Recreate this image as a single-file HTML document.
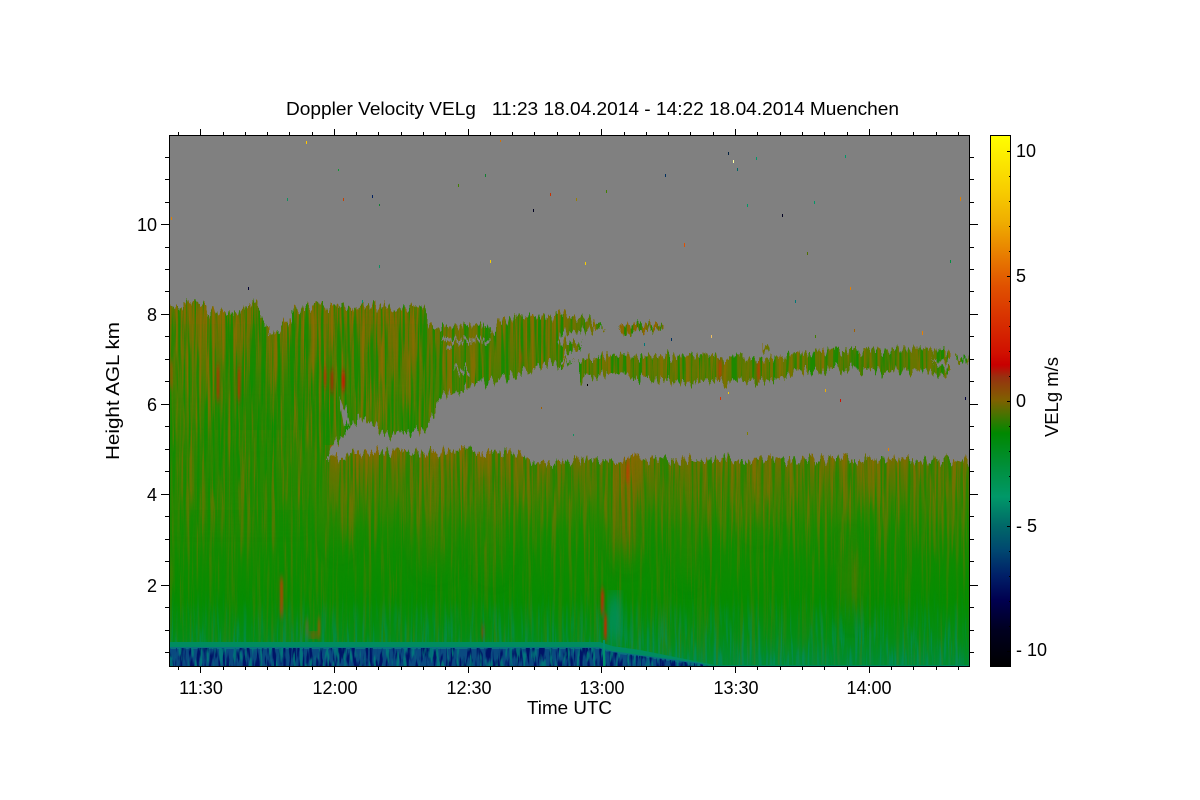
<!DOCTYPE html>
<html>
<head>
<meta charset="utf-8">
<title>Doppler Velocity VELg</title>
<style>
html,body{margin:0;padding:0;background:#fff}
svg{display:block}
text{font-family:"Liberation Sans",sans-serif;fill:#000}
</style>
</head>
<body>
<svg width="1200" height="800" viewBox="0 0 1200 800" xmlns="http://www.w3.org/2000/svg">
<defs>
<clipPath id="plot"><rect x="170" y="136" width="800" height="530"/></clipPath>
<filter id="jag" filterUnits="userSpaceOnUse" x="140" y="280" width="860" height="420" color-interpolation-filters="sRGB">
<feTurbulence type="fractalNoise" baseFrequency="0.33 0.012" numOctaves="3" seed="5" result="n"/>
<feColorMatrix in="n" type="matrix" values=".35 0 0 0 .325  0 1.6 0 0 -.3  0 0 1 0 0  0 0 0 0 1" result="m"/>
<feDisplacementMap in="SourceGraphic" in2="m" scale="14" xChannelSelector="R" yChannelSelector="G"/>
<feComponentTransfer><feFuncA type="discrete" tableValues="0 1"/></feComponentTransfer>
</filter>
<mask id="cloudM" maskUnits="userSpaceOnUse" x="140" y="280" width="860" height="420">
<g filter="url(#jag)">
<g fill="#fff">
<polygon points="150,700 150,308 170,307 205,303 208,313 240,312 244,304 258,304 262,318 270,328 268,335 275,335 285,322 292,322 291,310 320,306 425,308 428,322 437,328 455,325 480,325 492,327 491,334 495,333 497,322 525,316 570,316 590,320 606,328 575,332 560,333 558,340 582,344 578,350 566,352 560,358 575,362 540,366 520,372 505,378 490,382 470,385 460,392 445,395 437,403 432,418 425,430 405,433 385,435 375,425 360,418 345,432 325,456 340,458 360,452 400,452 450,452 500,452 520,455 540,466 555,463 580,459 700,459 800,460 880,460 1000,461 1000,700"/>
<polygon points="578,360 600,357 640,356 700,356 725,358 745,358 765,358 785,355 800,353 830,350 870,350 900,350 945,349 951,353 950,360 930,358 950,368 951,373 900,372 870,371 850,368 825,370 800,371 780,377 755,381 740,383 720,382 690,384 670,381 640,378 610,376 585,376 580,382"/>
<polygon points="618,324 640,324 664,325 663,330 635,331 630,335 622,335"/>
<polygon points="762,345 770,346 769,350 762,349"/>
<polygon points="955,354 970,354 970,358 956,358"/>
</g>
<g fill="#000">
<polygon points="440,339 490,339 490,342 445,343"/>
<polygon points="454,368 470,368 470,372 456,372"/>
<polygon points="340,398 345,408 350,425 344,425 341,410"/>
<polygon points="446,348 452,348 452,352 446,352"/>
<polygon points="575,336 590,336 590,339 575,339"/>
</g>
</g>
</mask>
<linearGradient id="base" gradientUnits="userSpaceOnUse" x1="0" y1="300" x2="0" y2="667">
<stop offset="0" stop-color="#7c6c00"/>
<stop offset=".1" stop-color="#6c7200"/>
<stop offset=".22" stop-color="#4c7e00"/>
<stop offset=".33" stop-color="#3a8300"/>
<stop offset=".44" stop-color="#3c8200"/>
<stop offset=".55" stop-color="#2c8600"/>
<stop offset=".68" stop-color="#128a00"/>
<stop offset=".82" stop-color="#068c00"/>
<stop offset=".92" stop-color="#048c18"/>
<stop offset="1" stop-color="#008c40"/>
</linearGradient>
<linearGradient id="topR" gradientUnits="userSpaceOnUse" x1="0" y1="450" x2="0" y2="530">
<stop offset="0" stop-color="#866800" stop-opacity="1"/>
<stop offset=".25" stop-color="#6c7000" stop-opacity=".8"/>
<stop offset="1" stop-color="#4a7c00" stop-opacity="0"/>
</linearGradient>
<linearGradient id="cb" gradientUnits="userSpaceOnUse" x1="0" y1="135" x2="0" y2="667">
<stop offset="0" stop-color="#ffff00"/>
<stop offset=".098" stop-color="#f8d000"/>
<stop offset=".16" stop-color="#f0b000"/>
<stop offset=".222" stop-color="#e88000"/>
<stop offset=".286" stop-color="#e05000"/>
<stop offset=".348" stop-color="#d83000"/>
<stop offset=".41" stop-color="#d01000"/>
<stop offset=".432" stop-color="#c80000"/>
<stop offset=".455" stop-color="#983010"/>
<stop offset=".498" stop-color="#806000"/>
<stop offset=".522" stop-color="#507000"/>
<stop offset=".56" stop-color="#008800"/>
<stop offset=".63" stop-color="#009040"/>
<stop offset=".68" stop-color="#009868"/>
<stop offset=".735" stop-color="#006868"/>
<stop offset=".78" stop-color="#004870"/>
<stop offset=".827" stop-color="#002068"/>
<stop offset=".874" stop-color="#000050"/>
<stop offset=".93" stop-color="#000020"/>
<stop offset="1" stop-color="#000000"/>
</linearGradient>
<linearGradient id="fadeM" gradientUnits="userSpaceOnUse" x1="0" y1="300" x2="0" y2="667">
<stop offset="0" stop-color="#ccc"/>
<stop offset=".3" stop-color="#bbb"/>
<stop offset=".55" stop-color="#888"/>
<stop offset=".8" stop-color="#3c3c3c"/>
<stop offset="1" stop-color="#333"/>
</linearGradient>
<mask id="fade" maskUnits="userSpaceOnUse" x="150" y="290" width="840" height="390"><rect x="150" y="290" width="840" height="390" fill="url(#fadeM)"/></mask>
<linearGradient id="fadeT" gradientUnits="userSpaceOnUse" x1="0" y1="590" x2="0" y2="645">
<stop offset="0" stop-color="#000"/>
<stop offset="1" stop-color="#999"/>
</linearGradient>
<mask id="fadeTeal" maskUnits="userSpaceOnUse" x="150" y="580" width="840" height="90"><rect x="150" y="580" width="840" height="90" fill="url(#fadeT)"/></mask>
<filter id="sBrown" filterUnits="userSpaceOnUse" x="160" y="290" width="820" height="390" color-interpolation-filters="sRGB">
<feTurbulence type="fractalNoise" baseFrequency="0.32 0.009" numOctaves="3" seed="4"/>
<feColorMatrix type="matrix" values="0 0 0 0 .56  0 0 0 0 .42  0 0 0 0 0  5 0 0 0 -2.3"/>
</filter>
<filter id="sGreen" filterUnits="userSpaceOnUse" x="160" y="290" width="820" height="390" color-interpolation-filters="sRGB">
<feTurbulence type="fractalNoise" baseFrequency="0.36 0.01" numOctaves="3" seed="11"/>
<feColorMatrix type="matrix" values="0 0 0 0 .02  0 0 0 0 .56  0 0 0 0 0  5 0 0 0 -2.3"/>
</filter>
<filter id="sTeal" filterUnits="userSpaceOnUse" x="160" y="580" width="820" height="90" color-interpolation-filters="sRGB">
<feTurbulence type="fractalNoise" baseFrequency="0.36 0.02" numOctaves="2" seed="7"/>
<feColorMatrix type="matrix" values="0 0 0 0 0  0 0 0 0 .55  0 0 0 0 .4  6 0 0 0 -3"/>
</filter>
<filter id="sBlue" filterUnits="userSpaceOnUse" x="160" y="640" width="820" height="30" color-interpolation-filters="sRGB">
<feTurbulence type="fractalNoise" baseFrequency="0.3 0.05" numOctaves="2" seed="9"/>
<feColorMatrix type="matrix" values="0 0 0 0 0  0 0 0 0 .08  0 0 0 0 .4  7 0 0 0 -3.3"/>
</filter>
<filter id="sBlueT" filterUnits="userSpaceOnUse" x="160" y="640" width="820" height="30" color-interpolation-filters="sRGB">
<feTurbulence type="fractalNoise" baseFrequency="0.3 0.05" numOctaves="2" seed="21"/>
<feColorMatrix type="matrix" values="0 0 0 0 0  0 0 0 0 .5  0 0 0 0 .48  7 0 0 0 -3.7"/>
</filter>
<clipPath id="blue"><polygon points="160,648 598,648 612,652 640,656 670,660 700,664 712,667 160,670"/></clipPath>
<filter id="b3"><feGaussianBlur stdDeviation="3 10"/></filter>
<filter id="b1"><feGaussianBlur stdDeviation="1 4"/></filter>
<filter id="b8"><feGaussianBlur stdDeviation="8 14"/></filter>
</defs>

<rect width="1200" height="800" fill="#fff"/>
<rect x="169" y="135" width="801" height="532" fill="#808080"/>

<g clip-path="url(#plot)">
<g mask="url(#cloudM)">
<rect x="150" y="290" width="840" height="390" fill="url(#base)"/>
<rect x="325" y="445" width="660" height="90" fill="url(#topR)"/>
<rect x="578" y="345" width="400" height="45" fill="#6f7400" opacity=".65"/>
<rect x="150" y="300" width="290" height="24" fill="#866a00" opacity=".4"/>
<rect x="612" y="320" width="56" height="18" fill="#966000" opacity=".8"/>
<g filter="url(#b8)">
<rect x="618" y="460" width="18" height="90" fill="#a85a00" opacity=".8"/>
<rect x="845" y="550" width="14" height="60" fill="#7c6c00" opacity=".45"/>
<rect x="680" y="470" width="16" height="100" fill="#7c6c00" opacity=".3"/>
<rect x="420" y="490" width="30" height="70" fill="#7c6c00" opacity=".35"/>
<rect x="330" y="460" width="20" height="80" fill="#7c6c00" opacity=".35"/>
<rect x="480" y="505" width="24" height="60" fill="#7c6c00" opacity=".25"/>
<rect x="745" y="462" width="26" height="60" fill="#7c6c00" opacity=".35"/>
<rect x="845" y="352" width="45" height="18" fill="#008c00" opacity=".8"/>
<rect x="220" y="370" width="120" height="60" fill="#008c00" opacity=".4"/>
<rect x="170" y="430" width="140" height="80" fill="#1a8900" opacity=".5"/>
<rect x="345" y="330" width="80" height="40" fill="#846a00" opacity=".4"/>
</g>
<g mask="url(#fade)">
<rect x="150" y="290" width="840" height="390" filter="url(#sBrown)"/>
<rect x="150" y="290" width="840" height="390" filter="url(#sGreen)"/>
</g>
<g filter="url(#b1)">
<rect x="217" y="366" width="2" height="34" fill="#c02800"/>
<rect x="238" y="368" width="2" height="32" fill="#c02800"/>
<rect x="324" y="368" width="2" height="18" fill="#c02800"/>
<rect x="331" y="370" width="2" height="22" fill="#c81800"/>
<rect x="342" y="372" width="3" height="18" fill="#d01000"/>
<rect x="170" y="362" width="2" height="26" fill="#a85000"/>
<rect x="520" y="352" width="2" height="12" fill="#a85000"/>
<rect x="718" y="358" width="4" height="22" fill="#a05000"/>
<rect x="757" y="360" width="3" height="20" fill="#b04000"/>
<rect x="719" y="362" width="2" height="18" fill="#b84000"/>
<rect x="626" y="462" width="3" height="20" fill="#b84000"/>
<rect x="280" y="578" width="3" height="38" fill="#b04400"/>
<rect x="601" y="590" width="3" height="24" fill="#c82800"/>
<rect x="604" y="615" width="3" height="24" fill="#c82800"/>
<rect x="482" y="626" width="2" height="12" fill="#c82000"/>
<rect x="306" y="620" width="2" height="18" fill="#b05000"/>
<rect x="318" y="618" width="2" height="20" fill="#b05000"/>
</g>
<rect x="309" y="632" width="9" height="6" fill="#a05000" filter="url(#b1)" opacity=".7"/>
<rect x="608" y="595" width="14" height="46" fill="#009070" filter="url(#b3)" opacity=".7"/>
<g mask="url(#fadeTeal)"><rect x="160" y="580" width="820" height="90" filter="url(#sTeal)"/></g>
</g>

<polygon points="160,642 600,642 612,646 640,650 660,654 690,660 715,665 975,665 975,670 160,670" fill="#008c60"/>
<polygon points="160,647 598,647 612,651 640,655 670,659 700,663 712,667 160,670" fill="#0a7080"/>
<polygon points="160,649 598,649 612,653 640,657 670,661 695,666 160,668" fill="#0a4a80"/>
<g clip-path="url(#blue)">
<rect x="160" y="640" width="820" height="30" filter="url(#sBlue)"/>
<rect x="160" y="640" width="820" height="30" filter="url(#sBlueT)" opacity=".8"/>
</g>
<rect x="603" y="640" width="2" height="27" fill="#00906a"/>

<!-- specks -->
<g shape-rendering="crispEdges">
<rect x="306" y="141" width="1" height="3" fill="#ffc800"/>
<rect x="338" y="169" width="1" height="2" fill="#0a9a30"/>
<rect x="287" y="198" width="1" height="3" fill="#109060"/>
<rect x="343" y="198" width="1" height="3" fill="#c84000"/>
<rect x="372" y="195" width="1" height="3" fill="#002060"/>
<rect x="379" y="204" width="1" height="2" fill="#108030"/>
<rect x="171" y="217" width="1" height="3" fill="#e08000"/>
<rect x="379" y="265" width="1" height="3" fill="#109060"/>
<rect x="248" y="287" width="1" height="3" fill="#000030"/>
<rect x="500" y="140" width="1" height="2" fill="#d87000"/>
<rect x="458" y="184" width="1" height="3" fill="#408000"/>
<rect x="485" y="174" width="1" height="3" fill="#108030"/>
<rect x="550" y="193" width="1" height="3" fill="#c83000"/>
<rect x="576" y="198" width="1" height="3" fill="#988000"/>
<rect x="606" y="190" width="1" height="3" fill="#408000"/>
<rect x="533" y="209" width="1" height="3" fill="#000020"/>
<rect x="665" y="174" width="1" height="3" fill="#003060"/>
<rect x="728" y="152" width="1" height="3" fill="#002040"/>
<rect x="733" y="160" width="1" height="3" fill="#ffffa0"/>
<rect x="737" y="168" width="1" height="3" fill="#006868"/>
<rect x="756" y="157" width="1" height="3" fill="#009868"/>
<rect x="845" y="155" width="1" height="3" fill="#009868"/>
<rect x="782" y="214" width="1" height="3" fill="#000020"/>
<rect x="747" y="204" width="1" height="3" fill="#009868"/>
<rect x="814" y="201" width="1" height="3" fill="#009868"/>
<rect x="960" y="197" width="1" height="4" fill="#e08000"/>
<rect x="684" y="243" width="1" height="4" fill="#e05000"/>
<rect x="490" y="260" width="1" height="3" fill="#f8d000"/>
<rect x="585" y="262" width="1" height="3" fill="#f8d000"/>
<rect x="807" y="252" width="1" height="3" fill="#507000"/>
<rect x="850" y="287" width="1" height="3" fill="#e88000"/>
<rect x="950" y="260" width="1" height="3" fill="#009040"/>
<rect x="795" y="300" width="1" height="3" fill="#007878"/>
<rect x="362" y="300" width="1" height="3" fill="#009868"/>
<rect x="711" y="335" width="1" height="3" fill="#f0c060"/>
<rect x="922" y="331" width="1" height="4" fill="#e88000"/>
<rect x="854" y="329" width="1" height="3" fill="#a06000"/>
<rect x="815" y="335" width="1" height="3" fill="#408000"/>
<rect x="644" y="343" width="1" height="3" fill="#007878"/>
<rect x="671" y="338" width="1" height="3" fill="#003060"/>
<rect x="587" y="384" width="1" height="2" fill="#000"/>
<rect x="720" y="397" width="1" height="3" fill="#d83000"/>
<rect x="728" y="392" width="1" height="2" fill="#f8d000"/>
<rect x="825" y="389" width="1" height="3" fill="#f0b000"/>
<rect x="840" y="399" width="1" height="3" fill="#d01000"/>
<rect x="965" y="397" width="1" height="3" fill="#000040"/>
<rect x="541" y="407" width="1" height="2" fill="#a06000"/>
<rect x="573" y="434" width="1" height="2" fill="#109060"/>
<rect x="747" y="432" width="1" height="3" fill="#808000"/>
<rect x="888" y="448" width="1" height="3" fill="#e88000"/>
</g>
</g>

<!-- plot frame + ticks -->
<g fill="none" stroke="#000" stroke-width="1" shape-rendering="crispEdges">
<rect x="169.5" y="135.5" width="800" height="531"/>
<path d="M178.5 135v-3M223.5 135v-3M245.5 135v-3M267.5 135v-3M289.5 135v-3M312.5 135v-3M356.5 135v-3M378.5 135v-3M401.5 135v-3M423.5 135v-3M445.5 135v-3M490.5 135v-3M512.5 135v-3M534.5 135v-3M557.5 135v-3M579.5 135v-3M624.5 135v-3M646.5 135v-3M668.5 135v-3M690.5 135v-3M713.5 135v-3M757.5 135v-3M780.5 135v-3M802.5 135v-3M824.5 135v-3M847.5 135v-3M891.5 135v-3M913.5 135v-3M936.5 135v-3M958.5 135v-3"/>
<path d="M200.5 135v-6M334.5 135v-6M468.5 135v-6M601.5 135v-6M735.5 135v-6M869.5 135v-6"/>
<path d="M178.5 667v3M223.5 667v3M245.5 667v3M267.5 667v3M289.5 667v3M312.5 667v3M356.5 667v3M378.5 667v3M401.5 667v3M423.5 667v3M445.5 667v3M490.5 667v3M512.5 667v3M534.5 667v3M557.5 667v3M579.5 667v3M624.5 667v3M646.5 667v3M668.5 667v3M690.5 667v3M713.5 667v3M757.5 667v3M780.5 667v3M802.5 667v3M824.5 667v3M847.5 667v3M891.5 667v3M913.5 667v3M936.5 667v3M958.5 667v3"/>
<path d="M200.5 667v6M334.5 667v6M468.5 667v6M601.5 667v6M735.5 667v6M869.5 667v6"/>
<path d="M169 157.5h-4M169 179.5h-4M169 202.5h-4M169 247.5h-4M169 269.5h-4M169 291.5h-4M169 336.5h-4M169 359.5h-4M169 381.5h-4M169 426.5h-4M169 449.5h-4M169 471.5h-4M169 516.5h-4M169 539.5h-4M169 561.5h-4M169 607.5h-4M169 630.5h-4M169 652.5h-4"/>
<path d="M169 224.5h-8M169 314.5h-8M169 404.5h-8M169 494.5h-8M169 585.5h-8"/>
<path d="M970 157.5h4M970 179.5h4M970 202.5h4M970 247.5h4M970 269.5h4M970 291.5h4M970 336.5h4M970 359.5h4M970 381.5h4M970 426.5h4M970 449.5h4M970 471.5h4M970 516.5h4M970 539.5h4M970 561.5h4M970 607.5h4M970 630.5h4M970 652.5h4"/>
<path d="M970 224.5h8M970 314.5h8M970 404.5h8M970 494.5h8M970 585.5h8"/>
</g>

<!-- colorbar -->
<rect x="990" y="135" width="20" height="532" fill="url(#cb)"/>
<g fill="none" stroke="#000" stroke-width="1" shape-rendering="crispEdges">
<rect x="990.5" y="135.5" width="20" height="531"/>
<path d="M1011 151.5h-4M1011 276.5h-4M1011 401.5h-4M1011 526.5h-4M1011 651.5h-4"/>
<path d="M1011 176.5h-2M1011 201.5h-2M1011 226.5h-2M1011 251.5h-2M1011 301.5h-2M1011 326.5h-2M1011 351.5h-2M1011 376.5h-2M1011 426.5h-2M1011 451.5h-2M1011 476.5h-2M1011 501.5h-2M1011 551.5h-2M1011 576.5h-2M1011 601.5h-2M1011 626.5h-2"/>
</g>

<!-- text -->
<text x="286" y="115" font-size="18" textLength="613" lengthAdjust="spacingAndGlyphs" xml:space="preserve">Doppler Velocity VELg   11:23 18.04.2014 - 14:22 18.04.2014 Muenchen</text>
<g font-size="18" text-anchor="end">
<text x="157" y="231">10</text>
<text x="157" y="321">8</text>
<text x="157" y="411">6</text>
<text x="157" y="501">4</text>
<text x="157" y="592">2</text>
</g>
<g font-size="18" text-anchor="middle">
<text x="201" y="694">11:30</text>
<text x="335" y="694">12:00</text>
<text x="469" y="694">12:30</text>
<text x="602" y="694">13:00</text>
<text x="736" y="694">13:30</text>
<text x="869" y="694">14:00</text>
</g>
<text x="527" y="714" font-size="18" textLength="85" lengthAdjust="spacingAndGlyphs">Time UTC</text>
<text transform="translate(119 460) rotate(-90)" font-size="18" textLength="138" lengthAdjust="spacingAndGlyphs">Height AGL km</text>
<text transform="translate(1058 437) rotate(-90)" font-size="18" textLength="80" lengthAdjust="spacingAndGlyphs">VELg m/s</text>
<g font-size="18">
<text x="1016" y="157">10</text>
<text x="1016" y="282">5</text>
<text x="1016" y="407">0</text>
<text x="1016" y="532">- 5</text>
<text x="1016" y="656">- 10</text>
</g>
</svg>
</body>
</html>
